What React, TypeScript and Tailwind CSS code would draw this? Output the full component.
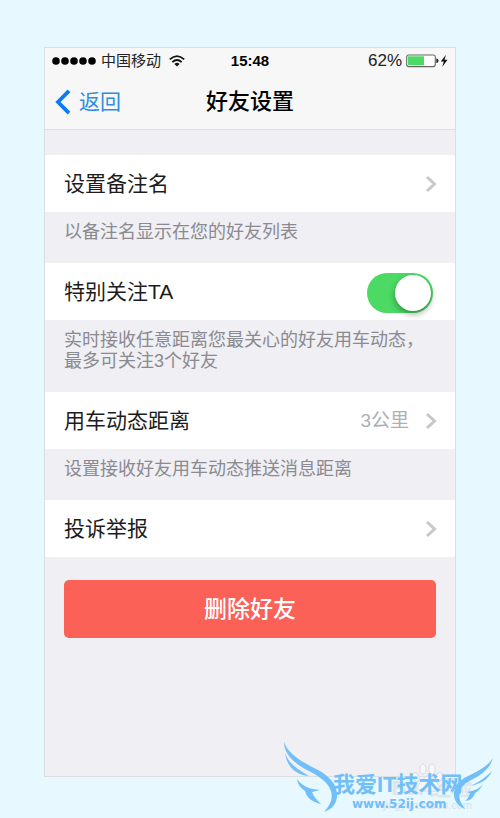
import { useState, type ReactNode } from 'react';

function Chevron() {
  return (
    <svg viewBox="0 0 12 18" className="h-[18px] w-3 shrink-0" fill="none" stroke="#c7c7cc" strokeWidth="3" aria-hidden="true">
      <path d="M2 2l7.5 7L2 16" />
    </svg>
  );
}

function StatusBar() {
  return (
    <div className="grid h-7 grid-cols-[1fr_auto_1fr] items-center px-2 text-black">
      <div className="flex items-center">
        <svg viewBox="0 0 44 8" className="h-2 w-11" fill="#000" aria-hidden="true">
          <circle cx="4" cy="4" r="3.8" />
          <circle cx="13" cy="4" r="3.8" />
          <circle cx="22" cy="4" r="3.8" />
          <circle cx="31" cy="4" r="3.8" />
          <circle cx="40" cy="4" r="3.8" />
        </svg>
        <span className="ml-[5px] text-[15px] leading-5 text-[#222]">中国移动</span>
        <svg viewBox="0 0 16 12" className="ml-2 h-3 w-4" fill="none" stroke="#111" strokeWidth="1.8" aria-hidden="true">
          <path d="M.8 4.4Q8-2.2 15.2 4.4M3.3 7.1Q8 2.8 12.7 7.1" />
          <path d="M8 11.6L5.4 8.9Q8 6.7 10.6 8.9Z" fill="#111" stroke="none" />
        </svg>
      </div>
      <span className="text-[15px] leading-5 font-bold">15:48</span>
      <div className="flex items-center justify-end">
        <span className="text-[17px] leading-5 text-[#222]">62%</span>
        <svg viewBox="0 0 42 14" className="ml-1 h-[14px] w-[42px]" aria-hidden="true">
          <rect x=".7" y="1" width="28.6" height="11.6" rx="2" fill="#fff" stroke="#666" strokeWidth="1.1" />
          <rect x="2" y="2.3" width="16" height="9" fill="#4cd964" />
          <path d="M30.3 4.5q2.2 0 2.2 2.3t-2.2 2.3z" fill="#222" />
          <path d="M40 .8L34.8 7.6h3L36.2 13l5.3-7.2h-3z" fill="#111" />
        </svg>
      </div>
    </div>
  );
}

function LinkRow({ title, value }: { title: string; value?: string }) {
  return (
    <button type="button" className="flex h-[57px] w-full items-center bg-white pr-[19px] pl-5 text-left">
      <span className="flex-1 text-[21px] leading-7 text-[#1c1c1c]">{title}</span>
      {value && <span className="mr-4 text-[19px] leading-7 text-[#b0b0b4]">{value}</span>}
      <Chevron />
    </button>
  );
}

function Hint({ children }: { children: ReactNode }) {
  return <p className="pt-[10px] pr-2 pl-5 text-[18px] leading-[21px] text-[#8a8a90]">{children}</p>;
}

function Watermark() {
  return (
    <div className="pointer-events-none absolute right-0 bottom-0 h-20 w-56">
      <div className="absolute top-[38px] right-7 text-[21px] leading-6 font-bold whitespace-nowrap text-[#dde5e9]">Bai 经验</div>
      <div className="absolute top-[59px] right-7 text-[11px] leading-4 text-[#d5e2e8]">jingyan.baidu.com</div>
      <svg viewBox="0 0 224 80" className="absolute inset-0 h-20 w-56" aria-hidden="true">
        <g fill="#f8f8fa" stroke="#d8dbdf" strokeWidth="1">
          <ellipse cx="140" cy="39" rx="3" ry="4.5" transform="rotate(-20 140 39)" />
          <ellipse cx="147" cy="31" rx="3.2" ry="5" />
          <ellipse cx="156" cy="31" rx="3.2" ry="5" />
          <ellipse cx="163" cy="39" rx="3" ry="4.5" transform="rotate(20 163 39)" />
          <path d="M152 38c-4 0-5 5-9 8-3 4 0 8 5 7h9c5 1 8-3 5-7-4-3-5-8-10-8z" />
        </g>
        <g fill="#70bff8">
          <path d="M8 4C13 18 29 25 42 32C53 38 61 46 61 57C61 66 56 71 48 74C55 66 57 60 55 53C52 44 43 38 31 32C18 25 8 16 8 4Z" />
          <path d="M9 15C13 26 21 31 33 38C20 37 11 29 9 15Z" />
          <path d="M21 41C27 49 34 51 44 52L36 54C38 59 41 62 45 66C36 64 31 60 29 53C25 50 22 47 21 41Z" />
          <path d="M217 20C214 31 204 38 195 42C184 48 181 55 185 65L189 71C182 68 178 63 178 56C178 47 184 42 192 38C202 33 211 29 217 20Z" />
          <path d="M216 33C212 42 204 46 194 48C204 44 210 39 216 33Z" />
          <path d="M207 46C204 52 201 54 199 55C198 60 193 63 189 63C192 61 193 58 194 55L191 54C198 53 203 51 207 46Z" />
        </g>
      </svg>
      <div className="absolute top-[35px] left-[57px] text-[22px] leading-6 font-bold whitespace-nowrap text-[#70bff8]">我爱IT技术网</div>
      <div className="absolute top-[58px] left-[76px] font-['DejaVu_Sans',sans-serif] text-[12px] leading-4 font-bold text-[#70bff8]">www.52ij.com</div>
    </div>
  );
}

export default function App() {
  const [starred, setStarred] = useState(true);
  return (
    <div className="relative flex min-h-screen flex-col overflow-hidden bg-[#e8f8ff] px-11 pt-[47px] pb-[41px] font-['Liberation_Sans','Noto_Sans_CJK_SC',sans-serif]">
      <main className="flex-1 bg-[#efeff4] pb-10 outline-1 -outline-offset-1 outline-[#d9dfe3]">
        <header className="border-b border-[#c8c8cc] bg-[#f7f7f7] outline-1 -outline-offset-1 outline-[#dcdfe2]">
          <StatusBar />
          <div className="grid h-[54px] grid-cols-[1fr_auto_1fr] items-center px-[11px]">
            <button type="button" className="flex items-center gap-2 justify-self-start text-[21px] leading-7 text-[#2e8de4]">
              <svg viewBox="0 0 16 26" className="h-[26px] w-4" fill="none" stroke="#087cf5" strokeWidth="3.8" aria-hidden="true">
                <path d="M14 1.8L3 13l11 11.2" />
              </svg>
              返回
            </button>
            <h1 className="text-[22px] leading-7 font-medium text-black">好友设置</h1>
          </div>
        </header>

        <section className="mt-[25px]">
          <LinkRow title="设置备注名" />
          <div className="h-[51px]">
            <Hint>以备注名显示在您的好友列表</Hint>
          </div>
        </section>

        <section>
          <label className="flex h-[57px] items-center justify-between bg-white pr-[23px] pl-5">
            <span className="text-[21px] leading-7 text-[#1c1c1c]">特别关注TA</span>
            <span className="relative mt-[3px] flex h-10 w-[66px]">
              <input
                type="checkbox"
                role="switch"
                checked={starred}
                onChange={(e) => setStarred(e.target.checked)}
                className="peer h-10 w-[66px] appearance-none rounded-full bg-[#d5d5d9] checked:bg-[#4cd964]"
              />
              <span className="pointer-events-none absolute top-[2px] left-[2px] size-9 rounded-full bg-white shadow-[0_3px_6px_rgba(0,0,0,0.35)] peer-checked:left-7" />
            </span>
          </label>
          <div className="h-[72px]">
            <Hint>实时接收任意距离您最关心的好友用车动态，<br />最多可关注3个好友</Hint>
          </div>
        </section>

        <section>
          <LinkRow title="用车动态距离" value="3公里" />
          <div className="h-[51px]">
            <Hint>设置接收好友用车动态推送消息距离</Hint>
          </div>
        </section>

        <section>
          <LinkRow title="投诉举报" />
        </section>

        <div className="px-5 pt-[23px]">
          <button type="button" className="h-[58px] w-full rounded-[5px] bg-[#fb6156] text-[23px] leading-8 font-medium text-white">
            删除好友
          </button>
        </div>
      </main>
      <Watermark />
    </div>
  );
}
